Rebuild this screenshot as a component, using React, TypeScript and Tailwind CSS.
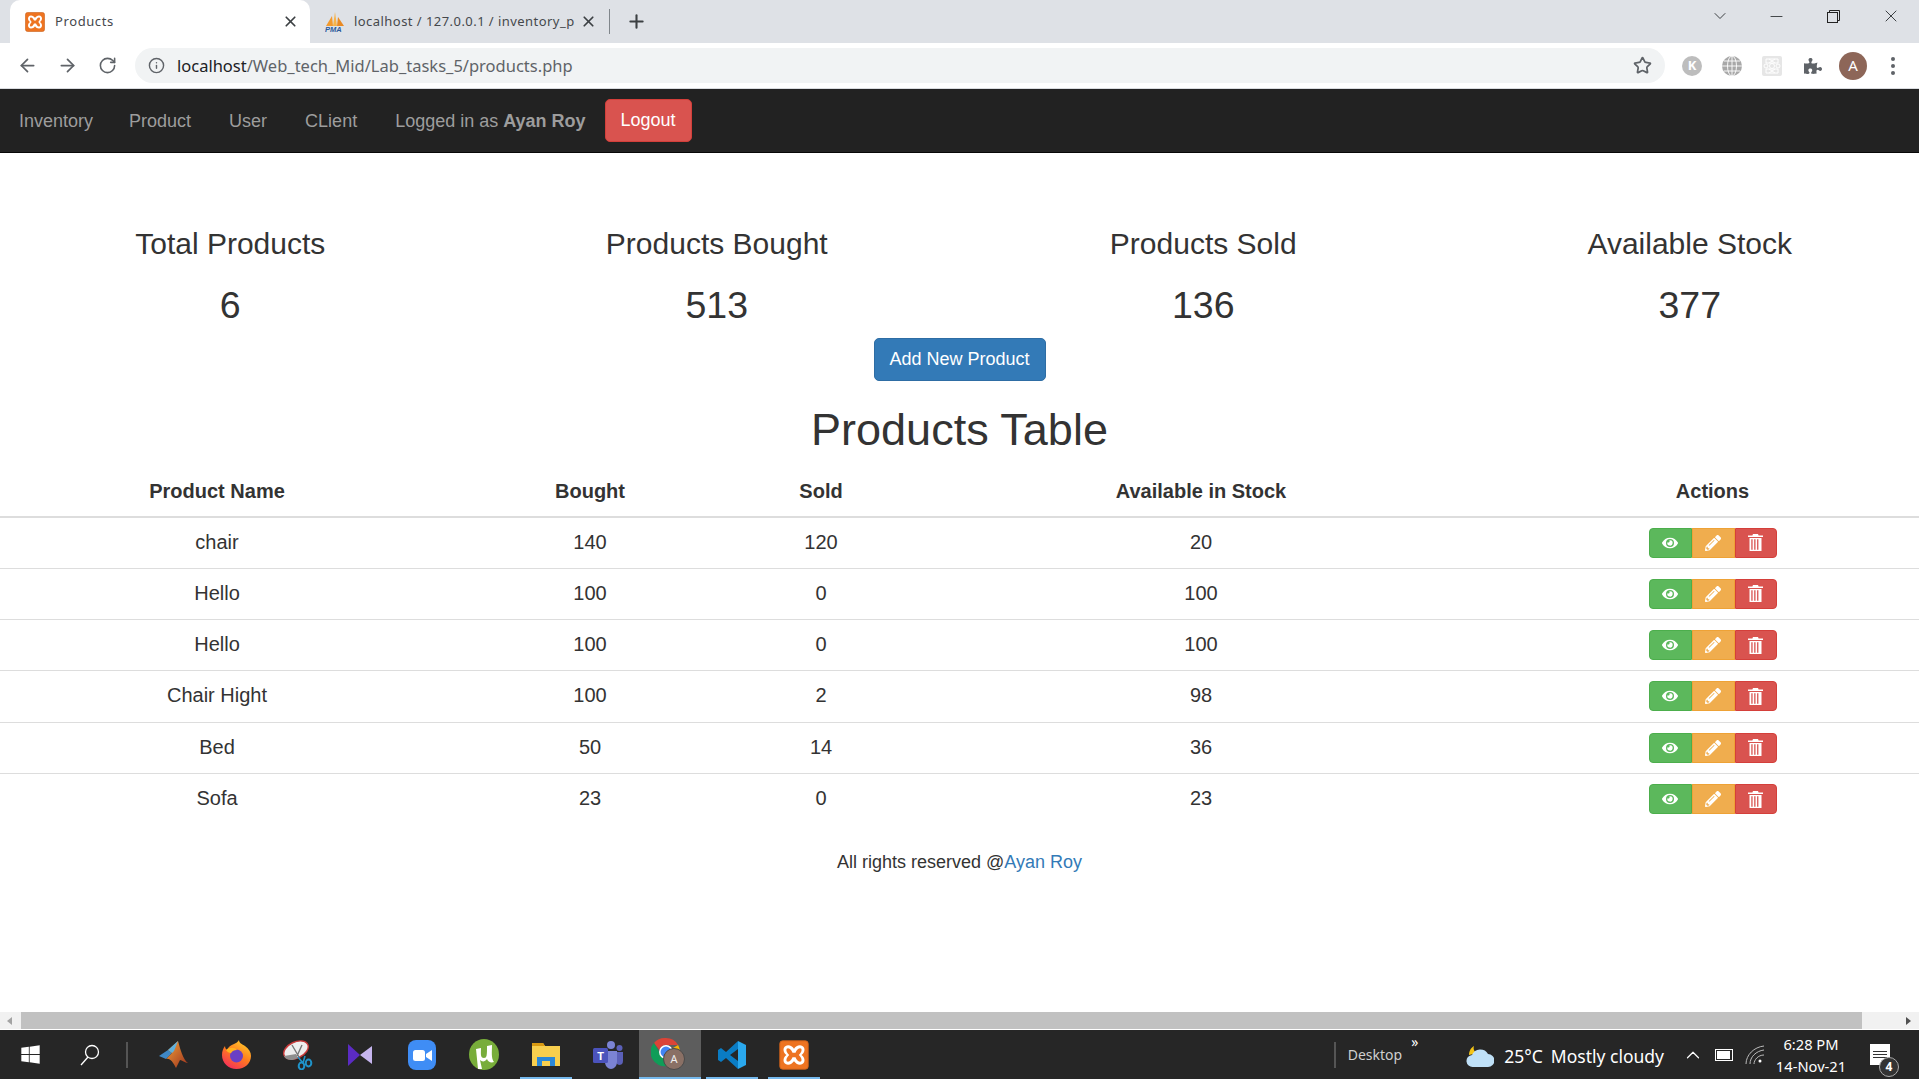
import { ArrowLeft, ArrowRight, ChevronDown, ChevronUp, Info, Minus, Plus, RotateCw, Star, X } from "lucide-react";
import { FaEye, FaPencilAlt, FaPuzzlePiece, FaWindows } from "react-icons/fa";

const STATS = [
  { label: "Total Products", value: "6" },
  { label: "Products Bought", value: "513" },
  { label: "Products Sold", value: "136" },
  { label: "Available Stock", value: "377" },
];

const PRODUCTS = [
  { name: "chair", bought: 140, sold: 120, stock: 20 },
  { name: "Hello", bought: 100, sold: 0, stock: 100 },
  { name: "Hello", bought: 100, sold: 0, stock: 100 },
  { name: "Chair Hight", bought: 100, sold: 2, stock: 98 },
  { name: "Bed", bought: 50, sold: 14, stock: 36 },
  { name: "Sofa", bought: 23, sold: 0, stock: 23 },
];

function XamppIcon({ size }: { size: number }) {
  return (
    <svg width={size} height={size} viewBox="0 0 20 20">
      <rect x="0.500" y="0.500" width="19" height="19" rx="2" fill="#ee7421" stroke="#c9601a" strokeWidth="0.600" />
      <path
        d="M6 3.500C4 3.500 3 5 3 6.500 3 8 3.800 9.200 5 10 3.800 10.800 3 12 3 13.500 3 15 4 16.500 6 16.500 7.800 16.500 9 15.500 10 14.200 11 15.500 12.200 16.500 14 16.500 16 16.500 17 15 17 13.500 17 12 16.200 10.800 15 10 16.200 9.200 17 8 17 6.500 17 5 16 3.500 14 3.500 12.200 3.500 11 4.500 10 5.800 9 4.500 7.800 3.500 6 3.500ZM6 5.500C7.500 5.500 8.300 7 9 8.500H11C11.700 7 12.500 5.500 14 5.500 15.500 5.500 15.500 7.800 13.200 10 15.500 12.200 15.500 14.500 14 14.500 12.500 14.500 11.700 13 11 11.500H9C8.300 13 7.500 14.500 6 14.500 4.500 14.500 4.500 12.200 6.800 10 4.500 7.800 4.500 5.500 6 5.500Z"
        fill="#fff"
        fillRule="evenodd"
      />
    </svg>
  );
}

function PmaIcon() {
  return (
    <svg width="20" height="22" viewBox="0 0 20 22">
      <path d="M1 15 7 5l1 10Z" fill="#f29a2e" />
      <path d="M8 15 10 1l2 14Z" fill="#f7b34a" />
      <path d="M12 15l1-9 6 9Z" fill="#e98a24" />
      <text x="0" y="21" fontSize="7.500" fontWeight="700" fontStyle="italic" fill="#2b5b9b" fontFamily="Liberation Sans, sans-serif">
        PMA
      </text>
    </svg>
  );
}

function TrashIcon() {
  return (
    <svg width="15" height="17" viewBox="0 0 15 17" fill="#fff">
      <path d="M5 0h5l.6 1.600H15v1.500H0V1.600h4.400Z" />
      <path d="M1.500 4h12v13h-12Zm1.800 1.200v10.500h1.300V5.200Zm2.900 0v10.500h1.300V5.200Zm2.900 0v10.500h1.300V5.200Z" fillRule="evenodd" />
    </svg>
  );
}

function ActionButtons() {
  return (
    <div className="flex justify-center">
      <button className="flex h-[30px] w-[43px] items-center justify-center rounded-l-[4px] border border-[#4cae4c] bg-[#5cb85c] text-white">
        <FaEye size={16} />
      </button>
      <button className="flex h-[30px] w-[43px] items-center justify-center border border-[#eea236] bg-[#f0ad4e] text-white">
        <FaPencilAlt size={16} />
      </button>
      <button className="flex h-[30px] w-[42px] items-center justify-center rounded-r-[4px] border border-[#d43f3a] bg-[#d9534f] text-white">
        <TrashIcon />
      </button>
    </div>
  );
}

function TabStrip() {
  return (
    <div className="flex h-[43px] items-end bg-[#dee1e6] pl-[10px]">
      <div className="flex h-[43px] w-[300px] items-center rounded-t-[10px] bg-white pl-[15px] pr-[11px]">
        <XamppIcon size={20} />
        <span className="ml-[10px] flex-1 text-[13px] tracking-[0.6px] text-[#45484c]">Products</span>
        <X size={17} strokeWidth={2.4} className="text-[#3c4043]" />
      </div>
      <div className="flex h-[43px] w-[299px] items-center pl-[15px] pr-[11px]">
        <PmaIcon />
        <span className="ml-[9px] w-[223px] text-[13px] tracking-[0.45px] whitespace-nowrap text-[#45484c]">
          localhost / 127.0.0.1 / inventory_p
        </span>
        <X size={17} strokeWidth={2.4} className="ml-[3px] shrink-0 text-[#3c4043]" />
      </div>
      <div className="mb-[9px] h-[25px] w-px bg-[#80868b]" />
      <Plus size={21} strokeWidth={2.4} className="mb-[11px] ml-[16px] text-[#3c4043]" />
      <div className="flex-1" />
      <div className="mb-[17px] flex items-center text-[#3c4043]">
        <ChevronDown size={20} strokeWidth={1.200} className="mr-[37px]" />
        <Minus size={19} strokeWidth={1.200} className="mr-[41px]" />
        <svg width="13" height="13" viewBox="0 0 13 13" fill="none" stroke="#222" className="mr-[41px]">
          <rect x="0.500" y="2.500" width="10" height="10" />
          <path d="M2.500 2.500v-2h10v10h-2" />
        </svg>
        <X size={20} strokeWidth={1.200} className="mr-[18px]" />
      </div>
    </div>
  );
}

function Toolbar() {
  return (
    <div className="flex h-[46px] items-center border-b border-[#dadce0] bg-white pl-[17px]">
      <ArrowLeft size={21} className="text-[#5f6368]" />
      <ArrowRight size={21} className="ml-[19px] text-[#5f6368]" />
      <RotateCw size={19} className="ml-[20px] text-[#5f6368]" />
      <div className="ml-[18px] flex h-[35px] w-[1530px] items-center rounded-full bg-[#f1f3f4] pl-[13px] pr-[13px]">
        <Info size={17} className="text-[#5f6368]" />
        <span className="ml-[12px] mt-[1px] flex-1 text-[16.500px] text-[#5f6368]">
          <span className="text-[#202124]">localhost</span>/Web_tech_Mid/Lab_tasks_5/products.php
        </span>
        <Star size={19} strokeWidth={2.200} className="text-[#5f6368]" />
      </div>
      <div className="ml-[17px] flex h-[20px] w-[20px] items-center justify-center rounded-full bg-[#bdbdbd] text-[13px] font-bold text-white">
        K
      </div>
      <svg width="20" height="20" viewBox="0 0 20 20" fill="none" stroke="#fff" strokeWidth="0.900" className="ml-[20px]">
        <circle cx="10" cy="10" r="10" fill="#a8a8a8" stroke="none" />
        <ellipse cx="10" cy="10" rx="4.500" ry="10" />
        <path d="M10 0v20M0 10h20M2 5h16M2 15h16" />
      </svg>
      <svg width="20" height="20" viewBox="0 0 20 20" fill="none" stroke="#fff" strokeWidth="1" className="ml-[20px]">
        <rect width="20" height="20" rx="2" fill="#e6e6e6" stroke="none" />
        <circle cx="10" cy="10" r="2.500" />
        <circle cx="4" cy="10" r="2" />
        <circle cx="16" cy="10" r="2" />
        <path d="M4 3h12v4H4ZM4 13h12v4H4ZM7 3l6 4M13 3 7 7M7 13l6 4M13 13l-6 4" />
      </svg>
      <FaPuzzlePiece size={18} className="ml-[22px] text-[#5f6368]" />
      <div className="ml-[17px] flex h-[28px] w-[28px] items-center justify-center rounded-full bg-[#8d6658] text-[15px] text-white">
        A
      </div>
      <div className="ml-[24px] flex flex-col gap-[3px]">
        <div className="h-[4px] w-[4px] rounded-full bg-[#5f6368]" />
        <div className="h-[4px] w-[4px] rounded-full bg-[#5f6368]" />
        <div className="h-[4px] w-[4px] rounded-full bg-[#5f6368]" />
      </div>
    </div>
  );
}

function Navbar() {
  return (
    <nav className="flex h-[64px] items-center border-b border-[#080808] bg-[#222222] pl-[19px] text-[18px] text-[#9d9d9d]">
      <span className="mt-[2px]">Inventory</span>
      <span className="ml-[36px] mt-[2px]">Product</span>
      <span className="ml-[38px] mt-[2px]">User</span>
      <span className="ml-[38px] mt-[2px]">CLient</span>
      <span className="ml-[38px] mt-[2px]">
        Logged in as <b>Ayan Roy</b>
      </span>
      <button className="ml-[19px] h-[43px] w-[87px] rounded-[5px] border border-[#d43f3a] bg-[#d9534f] text-white">
        Logout
      </button>
    </nav>
  );
}

function ProductsPage() {
  return (
    <main className="min-h-0 flex-1 overflow-hidden bg-white text-[18px] text-[#333333]">
      <div className="ml-[-13px] grid w-[1946px] grid-cols-4 pt-[74px] text-center">
        {STATS.map((stat) => (
          <div key={stat.label}>
            <h3 className="text-[30px] leading-[33px]">{stat.label}</h3>
            <p className="mt-[25px] text-[37.500px] leading-[41px]">{stat.value}</p>
          </div>
        ))}
      </div>

      <div className="mt-[12px] flex justify-center">
        <button className="h-[43px] w-[172px] rounded-[5px] border border-[#2e6da4] bg-[#337ab7] text-white">
          Add New Product
        </button>
      </div>

      <h1 className="mt-[24px] text-center text-[45px] leading-[50px]">Products Table</h1>

      <table className="mt-[11px] w-full table-fixed border-collapse text-center text-[20px]">
        <colgroup>
          <col className="w-[434px]" />
          <col className="w-[312px]" />
          <col className="w-[150px]" />
          <col className="w-[610px]" />
          <col />
        </colgroup>
        <thead>
          <tr className="h-[51px] border-b-2 border-[#dddddd] font-bold">
            <th>Product Name</th>
            <th>Bought</th>
            <th>Sold</th>
            <th>Available in Stock</th>
            <th>Actions</th>
          </tr>
        </thead>
        <tbody>
          {PRODUCTS.map((p, i) => (
            <tr key={i} className={i === 0 ? "h-[51.250px]" : "h-[51.250px] border-t border-[#dddddd]"}>
              <td className="pb-[2px]">{p.name}</td>
              <td className="pb-[2px]">{p.bought}</td>
              <td className="pb-[2px]">{p.sold}</td>
              <td className="pb-[2px]">{p.stock}</td>
              <td>
                <ActionButtons />
              </td>
            </tr>
          ))}
        </tbody>
      </table>

      <p className="mt-[25px] text-center leading-[25px]">
        All rights reserved @<a className="text-[#337ab7]">Ayan Roy</a>
      </p>
    </main>
  );
}

function Scrollbar() {
  return (
    <div className="flex h-[18px] items-center border-b border-white bg-[#f1f1f1]">
      <div className="ml-[7px] h-0 w-0 border-y-[4px] border-r-[5px] border-y-transparent border-r-[#a3a3a3]" />
      <div className="ml-[9px] h-[17px] w-[1841px] bg-[#c1c1c1]" />
      <div className="ml-[44px] h-0 w-0 border-y-[4px] border-l-[5px] border-y-transparent border-l-[#505050]" />
    </div>
  );
}

function TaskIcon({ active, running, children }: { active?: boolean; running?: boolean; children: React.ReactNode }) {
  return (
    <div className={active ? "relative flex h-full w-[62px] items-center justify-center bg-[#5d5d5d]" : "relative flex h-full w-[62px] items-center justify-center"}>
      {children}
      {running && <div className={active ? "absolute inset-x-0 bottom-0 h-[2px] bg-[#76b9ed]" : "absolute inset-x-[5px] bottom-0 h-[2px] bg-[#76b9ed]"} />}
    </div>
  );
}

function Taskbar() {
  return (
    <div className="flex h-[49px] items-center bg-[#262626] font-['Noto_Sans',sans-serif] text-white">
      <div className="flex h-full w-[60px] items-center justify-center">
        <FaWindows size={21} />
      </div>
      <div className="flex h-full w-[60px] items-center justify-center">
        <svg width="20" height="22" viewBox="0 0 20 22" fill="none" stroke="#fff" strokeWidth="1.300">
          <circle cx="12" cy="8" r="6.500" />
          <path d="M8 13 1 21" />
        </svg>
      </div>
      <div className="ml-[6px] h-[26px] w-[2px] border-x border-[#555]" />
      <div className="ml-[15px] flex h-full items-center">
        <TaskIcon>
          <svg width="30" height="27" viewBox="0 0 30 27">
            <defs>
              <linearGradient id="matlabPeak" x1="0" y1="0" x2="1" y2="1">
                <stop offset="0" stopColor="#f2a33a" />
                <stop offset="1" stopColor="#9c2f1c" />
              </linearGradient>
            </defs>
            <path d="M0 15 9 9l4 3-6 6Z" fill="#3f88c5" />
            <path d="M9 9 19 0c2 7 5 19 10 22-3 0-6-3-8-3l-4 8c-3-6-6-10-10-9l6-6Z" fill="url(#matlabPeak)" />
            <path d="M9 9 19 0l-4 10-2 2Z" fill="#5fb0dc" />
          </svg>
        </TaskIcon>
        <TaskIcon>
          <svg width="29" height="29" viewBox="0 0 29 29">
            <defs>
              <linearGradient id="foxBody" x1="0.800" y1="0" x2="0.200" y2="1">
                <stop offset="0" stopColor="#ffd02b" />
                <stop offset="0.500" stopColor="#ff7a1f" />
                <stop offset="1" stopColor="#f5295f" />
              </linearGradient>
            </defs>
            <path d="M14.500 29C6.500 29 0 23 0 15c0-4 1-6 3-9 0 2 1 3 2 4 1-3 4-5 7-6 2-1 4-2 5-4 0 3 3 4 6 6 4 3 6 6 6 10 0 7-6 13-14.500 13Z" fill="url(#foxBody)" />
            <circle cx="14.500" cy="16" r="6.500" fill="#6a3fc4" />
            <path d="M4 10c3-3 9-3 11 0-3 0-5 1-6 3-2 0-4-1-5-3Z" fill="#ffb31f" />
          </svg>
        </TaskIcon>
        <TaskIcon>
          <svg width="30" height="30" viewBox="0 0 30 30" fill="none">
            <ellipse cx="13" cy="10" rx="13" ry="8" transform="rotate(-25 13 10)" fill="#eee" stroke="#c93a3a" strokeWidth="1.400" />
            <path d="M1 16c2 5 9 5 14 2l-2-4Z" fill="#8e8e8e" />
            <path d="M9 5l7 12M19 5l-5 11" stroke="#777" strokeWidth="1.400" />
            <path d="M15 17l5 6M22 16l-2 7" stroke="#1f93c9" strokeWidth="1.600" />
            <ellipse cx="18.500" cy="26" rx="2.800" ry="3.400" stroke="#1f93c9" strokeWidth="2" />
            <ellipse cx="25.500" cy="23" rx="2.800" ry="3.400" stroke="#1f93c9" strokeWidth="2" />
          </svg>
        </TaskIcon>
        <TaskIcon>
          <svg width="26" height="26" viewBox="0 0 26 26">
            <path d="M1 2v22l12-11Z" fill="#5b2bc4" />
            <path d="M25 4v18l-12-9Z" fill="#c6b5ee" />
          </svg>
        </TaskIcon>
        <TaskIcon>
          <svg width="28" height="30" viewBox="0 0 28 30">
            <rect width="28" height="30" rx="8" fill="#3f8df5" />
            <rect x="5" y="10" width="12" height="11" rx="2.500" fill="#fff" />
            <path d="M18 14l6-4v11l-6-4Z" fill="#fff" />
          </svg>
        </TaskIcon>
        <TaskIcon>
          <svg width="30" height="31" viewBox="0 0 30 31">
            <ellipse cx="15" cy="15.500" rx="15" ry="15.500" fill="#78ad3a" />
            <path d="M7 10l5-1c0 5-1 10 3 10 3 0 3-3 3-12l5-1c0 7-1 13 2 17-3 1-6 0-7-3-2 3-5 3-7 1l2 9-4 0Z" fill="#fff" />
          </svg>
        </TaskIcon>
        <TaskIcon running>
          <svg width="28" height="23" viewBox="0 0 28 23">
            <path d="M0 0h11l2 3h15v20H0Z" fill="#f8cf4e" />
            <path d="M0 0h11l2 3H0Z" fill="#d99a12" />
            <path d="M5 23v-9h18v9h-5v-5h-8v5Z" fill="#2b88d8" />
          </svg>
        </TaskIcon>
        <TaskIcon>
          <svg width="30" height="28" viewBox="0 0 30 28">
            <circle cx="18" cy="4" r="4" fill="#7b83d4" />
            <circle cx="26.500" cy="7" r="3" fill="#5b60b8" />
            <path d="M12 10h12v11c0 4-3 7-6 7s-6-3-6-7Z" fill="#7b83d4" />
            <path d="M24 11h6v9c0 3-2 4-4 4l-2-1Z" fill="#5b60b8" />
            <rect x="0" y="7" width="15" height="15" rx="1.500" fill="#4b53bc" />
            <text x="7.500" y="18.500" fill="#fff" fontSize="11" fontWeight="700" textAnchor="middle" fontFamily="Liberation Sans, sans-serif">
              T
            </text>
          </svg>
        </TaskIcon>
        <TaskIcon active running>
          <svg width="38" height="36" viewBox="0 0 38 36">
            <path d="M15 1a14 14 0 0 1 12.100 7H15a7 7 0 0 0-6.600 5L3 6a14 14 0 0 1 12-5Z" fill="#db4437" />
            <path d="M27.100 8A14 14 0 0 1 16 29l5.500-9.500A7 7 0 0 0 22 11Z" fill="#f4b400" />
            <path d="M3 6l5.500 9.500a7 7 0 0 0 9 4.500L16 29A14 14 0 0 1 3 6Z" fill="#0f9d58" />
            <circle cx="15" cy="15" r="6.200" fill="#4285f4" stroke="#fff" strokeWidth="1.500" />
            <circle cx="23" cy="22" r="10.500" fill="#8a7065" stroke="#4a4a4a" strokeWidth="1" />
            <text x="23" y="26" fill="#eee" fontSize="11" textAnchor="middle" fontFamily="Noto Sans, sans-serif">
              A
            </text>
          </svg>
        </TaskIcon>
        <TaskIcon running>
          <svg width="30" height="30" viewBox="0 0 30 30">
            <path d="M21 1 9 12 4 8 1 10v10l3 2 5-4 12 11v-8l-8-6 8-6Z" fill="#0a7cc4" />
            <path d="M21 1l8 4v20l-8 4Z" fill="#2aa8ee" />
          </svg>
        </TaskIcon>
        <TaskIcon running>
          <XamppIcon size={30} />
        </TaskIcon>
      </div>
      <div className="flex-1" />
      <div className="h-[26px] w-[2px] border-x border-[#555]" />
      <span className="ml-[12px] text-[14px] text-[#cfcfcf]">Desktop</span>
      <span className="mb-[26px] ml-[9px] text-[14px] leading-none">»</span>
      <svg width="29" height="27" viewBox="0 0 29 27" className="ml-[47px]">
        <path d="M4 14C4 9 7 6 9 5c-1 3 0 6 4 7Z" fill="#f5c518" />
        <path d="M8 26a6 6 0 0 1-1-12 9 9 0 0 1 16-1 6.500 6.500 0 0 1 0 13Z" fill="#bfe0f7" />
      </svg>
      <span className="ml-[10px] mt-[3px] text-[17.500px]">25°C</span>
      <span className="ml-[8px] mt-[3px] text-[17.500px]">Mostly cloudy</span>
      <ChevronUp size={22} strokeWidth={1.300} className="ml-[18px]" />
      <div className="ml-[11px] flex h-[12px] w-[18px] items-center border border-white p-[1px]">
        <div className="h-full w-[13px] bg-white" />
      </div>
      <svg width="20" height="20" viewBox="0 0 20 20" fill="none" stroke="#bbb" strokeWidth="1" className="ml-[12px]">
        <path d="M1 19C1 10 9 2 19 1M5 19c0-7 6-13 14-14M9 19c0-4 4-9 10-9" />
        <circle cx="15" cy="16" r="1.500" fill="#fff" stroke="none" />
      </svg>
      <div className="ml-[10px] flex w-[72px] flex-col items-center text-[14.700px] leading-[22px]">
        <span>6:28 PM</span>
        <span>14-Nov-21</span>
      </div>
      <div className="relative ml-[23px] mr-[29px] flex h-[21px] w-[20px] flex-col justify-center gap-[2px] bg-white px-[3px]">
        <div className="h-px bg-[#333]" />
        <div className="h-px bg-[#333]" />
        <div className="h-px bg-[#333]" />
        <div className="absolute -right-[9px] -bottom-[12px] flex h-[20px] w-[20px] items-center justify-center rounded-full border border-[#aaa] bg-[#333] text-[12px] font-bold text-white">
          4
        </div>
      </div>
    </div>
  );
}

export default function App() {
  return (
    <div className="flex h-screen flex-col overflow-hidden font-['Liberation_Sans',Arial,sans-serif]">
      <div className="font-['Noto_Sans',sans-serif]">
        <TabStrip />
        <Toolbar />
      </div>
      <Navbar />
      <ProductsPage />
      <Scrollbar />
      <Taskbar />
    </div>
  );
}
